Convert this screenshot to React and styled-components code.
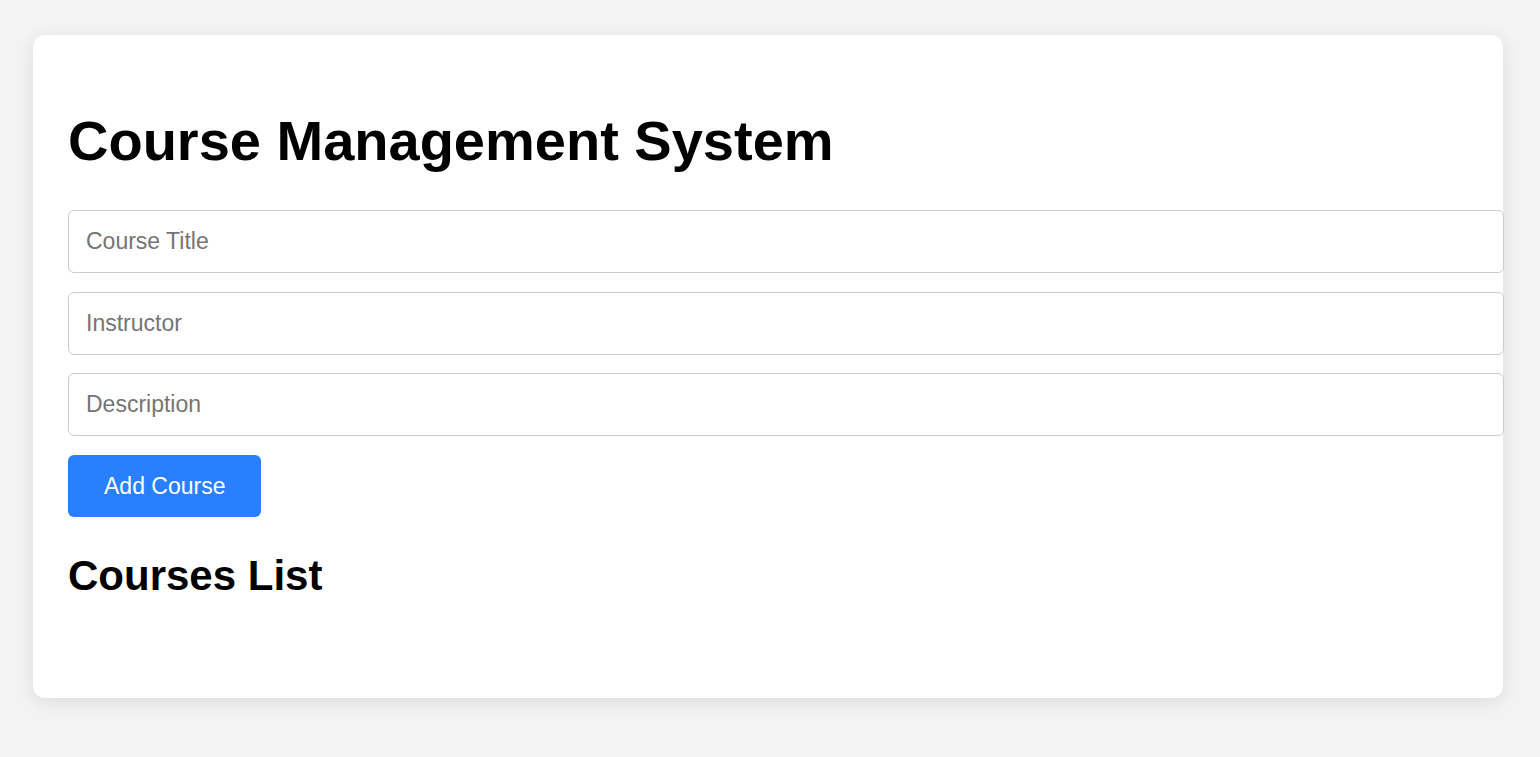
import React from 'react';
import styled, { createGlobalStyle } from 'styled-components';

const GlobalStyle = createGlobalStyle`
  html, body {
    margin: 0;
    padding: 0;
    background: #f3f3f3;
    font-family: "Liberation Sans", Arial, sans-serif;
  }
`;

const Page = styled.div`
  padding: 35px 37px 35px 33px;
`;

const Card = styled.div`
  background: #fff;
  border-radius: 12px;
  box-shadow: 0 4px 18px rgba(0, 0, 0, 0.09);
  padding: 35px;
  display: flow-root;
`;

const Title = styled.h1`
  font-size: 56px;
  font-weight: bold;
  margin: 37.5px 0 37.5px;
  color: #000;
`;

const Form = styled.form`
  margin: 0;
`;

const Input = styled.input`
  display: block;
  width: 100%;
  box-sizing: content-box;
  font-family: inherit;
  font-size: 23px;
  line-height: normal;
  padding: 17px 17px;
  border: 1px solid #ccc;
  border-radius: 6px;
  margin: 0 0 18.6px;
  color: #000;
  outline: none;

  &::placeholder {
    color: #757575;
  }
`;

const Button = styled.button`
  font-family: inherit;
  font-size: 23px;
  line-height: normal;
  padding: 17.8px 36px;
  background: #2a7fff;
  color: #fff;
  border: none;
  border-radius: 6px;
  cursor: pointer;
`;

const SubTitle = styled.h2`
  font-size: 42px;
  font-weight: bold;
  margin: 35px 0 0;
  color: #000;
`;

const CourseList = styled.ul`
  list-style: none;
  padding: 0;
  margin: 0;
  min-height: 63px;
`;

export default function App() {
  return (
    <Page>
      <GlobalStyle />
      <Card>
        <Title>Course Management System</Title>
        <Form onSubmit={(e) => e.preventDefault()}>
          <Input type="text" placeholder="Course Title" />
          <Input type="text" placeholder="Instructor" />
          <Input type="text" placeholder="Description" />
          <Button type="submit">Add Course</Button>
        </Form>
        <SubTitle>Courses List</SubTitle>
        <CourseList />
      </Card>
    </Page>
  );
}
